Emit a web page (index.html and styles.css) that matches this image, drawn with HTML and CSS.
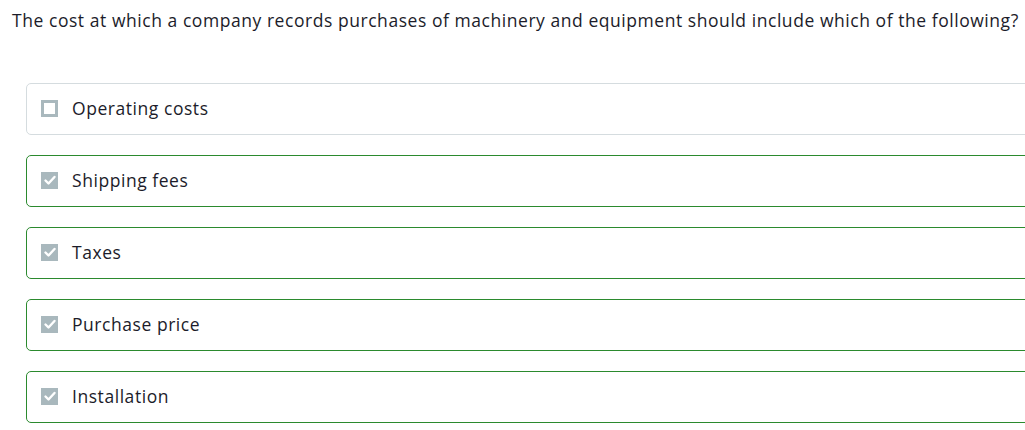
FILE: index.html
```html
<!DOCTYPE html>
<html>
<head>
<meta charset="utf-8">
<link rel="stylesheet" href="styles.css">
</head>
<body>
<div class="question">The cost at which a company records purchases of machinery and equipment should include which of the following?</div>
<div class="options">
  <div class="option">
    <span class="box"></span>
    <span class="label">Operating costs</span>
  </div>
  <div class="option correct">
    <span class="box checked"><svg viewBox="0 0 16 16" width="16" height="16"><path d="M3.5 8.5 L6.5 11.5 L12.5 5" fill="none" stroke="#fff" stroke-width="2.4" stroke-linecap="round" stroke-linejoin="round"/></svg></span>
    <span class="label">Shipping fees</span>
  </div>
  <div class="option correct">
    <span class="box checked"><svg viewBox="0 0 16 16" width="16" height="16"><path d="M3.5 8.5 L6.5 11.5 L12.5 5" fill="none" stroke="#fff" stroke-width="2.4" stroke-linecap="round" stroke-linejoin="round"/></svg></span>
    <span class="label">Taxes</span>
  </div>
  <div class="option correct">
    <span class="box checked"><svg viewBox="0 0 16 16" width="16" height="16"><path d="M3.5 8.5 L6.5 11.5 L12.5 5" fill="none" stroke="#fff" stroke-width="2.4" stroke-linecap="round" stroke-linejoin="round"/></svg></span>
    <span class="label">Purchase price</span>
  </div>
  <div class="option correct">
    <span class="box checked"><svg viewBox="0 0 16 16" width="16" height="16"><path d="M3.5 8.5 L6.5 11.5 L12.5 5" fill="none" stroke="#fff" stroke-width="2.4" stroke-linecap="round" stroke-linejoin="round"/></svg></span>
    <span class="label">Installation</span>
  </div>
</div>
</body>
</html>
```
FILE: styles.css
```css
html, body {
  margin: 0;
  padding: 0;
  background: #fff;
  overflow: hidden;
}
body {
  font-family: "Open Sans", "Liberation Sans", sans-serif;
  color: #1c1c2a;
  width: 1025px;
  height: 430px;
}
.question {
  padding: 9px 0 0 12px;
  font-size: 17.5px;
  letter-spacing: 0.55px;
  line-height: 22px;
  white-space: nowrap;
}
.options {
  margin-top: 52px;
  margin-left: 26px;
  width: 1020px;
  display: flex;
  flex-direction: column;
  gap: 20px;
}
.option {
  box-sizing: border-box;
  height: 52px;
  border: 1px solid #d5dcdf;
  border-radius: 5px;
  display: flex;
  align-items: center;
  padding-left: 14px;
  padding-bottom: 2px;
}
.option.correct {
  border-color: #2b8a2e;
}
.box {
  box-sizing: border-box;
  width: 17px;
  height: 17px;
  border: 3px solid #a9b8bd;
  background: #fff;
  display: flex;
  align-items: center;
  justify-content: center;
  flex: none;
}
.box.checked {
  background: #a9b8bd;
  border: none;
}
.label {
  margin-left: 14px;
  font-size: 17.5px;
  letter-spacing: 0.55px;
  line-height: 22px;
}
```
